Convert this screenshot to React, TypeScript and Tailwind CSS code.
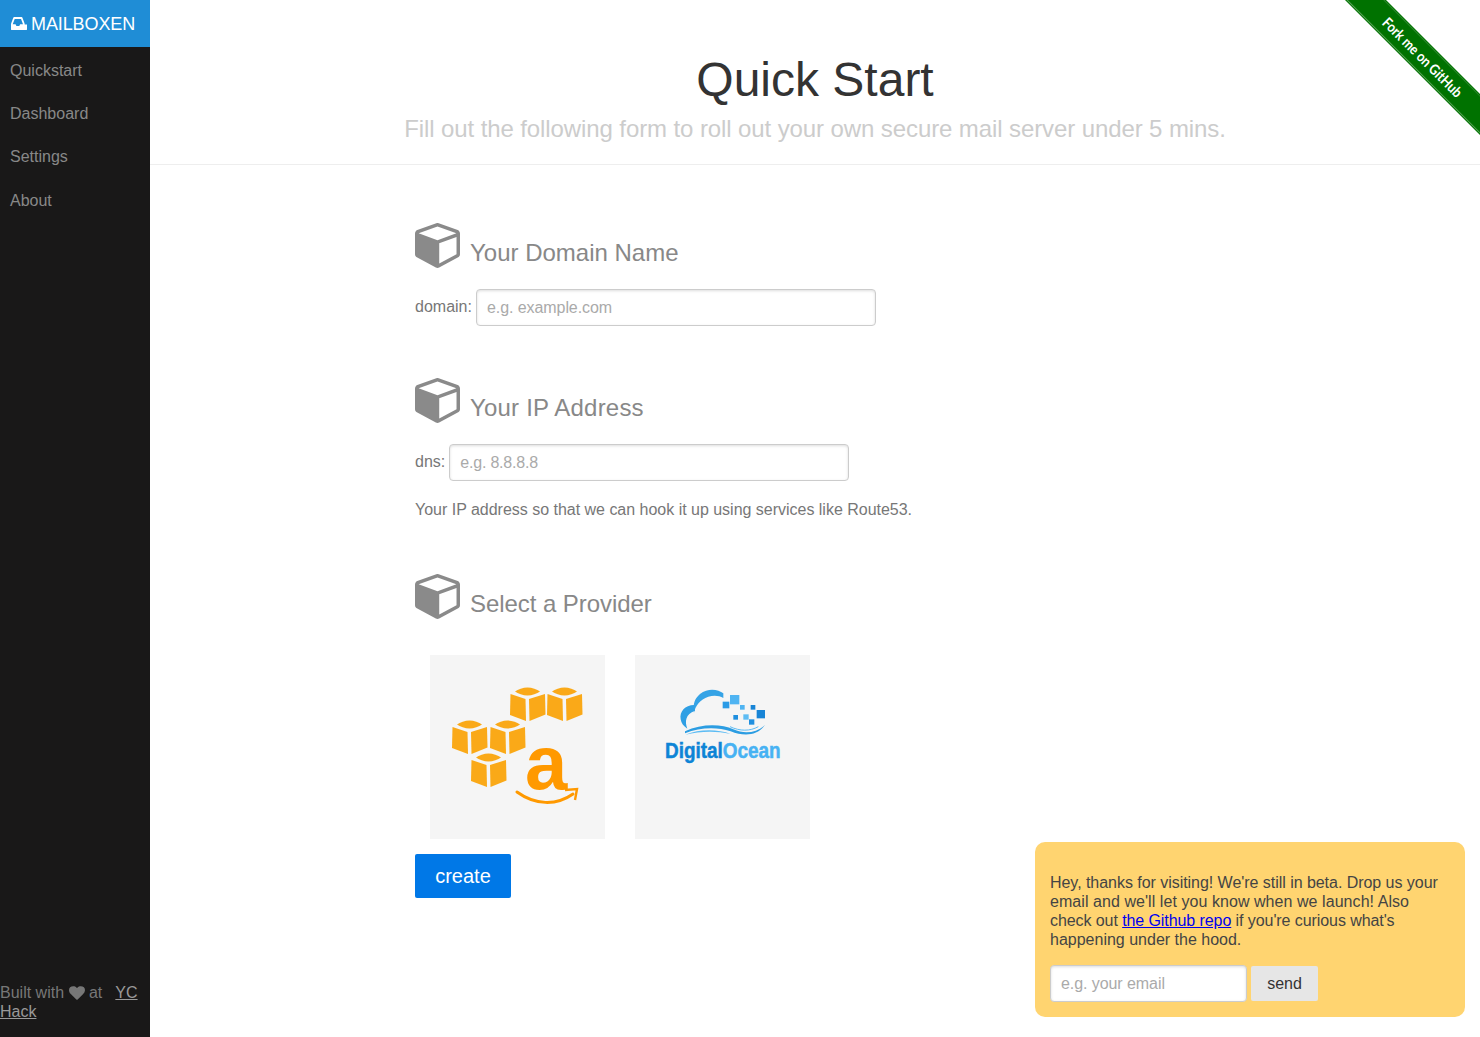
import React from "react";

const font = "font-['Liberation_Sans',Arial,sans-serif]";

function CubeIcon() {
  return (
    <svg viewBox="0 128 1664 1665" className="w-[45px] h-[45px] shrink-0" fill="#8a8a8a">
      <path d="M896 1629l640-349v-636l-640 233v752zm-64-864l698-254-698-254-698 254zm832-252v768q0 35-18 65t-49 47l-704 384q-28 16-61 16t-61-16l-704-384q-31-17-49-47t-18-65v-768q0-40 23-73t61-49l704-256q22-8 44-8t44 8l704 256q38 16 61 49t23 73z" />
    </svg>
  );
}

function Heading({ children, tracking = "" }: { children: React.ReactNode; tracking?: string }) {
  return (
    <div className="flex items-end h-[45px]">
      <CubeIcon />
      <h2 className={`ml-[10px] text-[24px] leading-[30px] text-[#888] font-normal ${tracking}`}>{children}</h2>
    </div>
  );
}

function Field({ label, placeholder, tracking }: { label: string; placeholder: string; tracking: string }) {
  return (
    <div className="flex items-center mt-[21px]">
      <label className="text-[16px] text-[#777] mr-[4px] -mt-[2px]">{label}</label>
      <input
        placeholder={placeholder}
        className={`w-[400px] h-[37px] px-[10px] bg-white text-[16px] border border-[#ccc] rounded-[4px] shadow-[inset_0_1px_3px_#ddd] placeholder:text-[#aaa] outline-none ${tracking}`}
      />
    </div>
  );
}

function AwsCube({ x, y }: { x: number; y: number }) {
  return (
    <g transform={`translate(${x} ${y})`} fill="#faa918">
      <path d="M17.5 0.5 C22 0.5 27 2.5 30 4.5 C27 6.5 22 8.5 17.5 8.5 C13 8.5 8 6.5 5 4.5 C8 2.5 13 0.5 17.5 0.5Z" />
      <path d="M0.5 7 L15.5 12 L16 34 L0 28 Z" />
      <path d="M19 12 L35 7 L35.5 27.5 L19.5 34 Z" />
    </g>
  );
}

function AwsLogo() {
  return (
    <svg viewBox="0 0 175 184" className="block w-[175px] h-[184px]">
      <AwsCube x={80} y={32} />
      <AwsCube x={117} y={32} />
      <AwsCube x={22} y={65} />
      <AwsCube x={60} y={65} />
      <AwsCube x={41} y={98} />
      <text x="95" y="134" fontFamily="'Liberation Sans',Arial,sans-serif" fontWeight="700" fontSize="76" fill="#ff9900">a</text>
      <path d="M87 137 C105 150 126 151 143 139" fill="none" stroke="#ff9900" strokeWidth="3" strokeLinecap="round" />
      <path d="M135 135 L147 134 L145 145" fill="none" stroke="#ff9900" strokeWidth="2.4" />
    </svg>
  );
}

function DoLogo() {
  const squares: [number, number, number, string][] = [
    [270, 75, 28, "#4fb4f2"],
    [248, 95, 20, "#2a9be6"],
    [300, 105, 14, "#4fb4f2"],
    [332, 105, 14, "#1784d6"],
    [350, 120, 25, "#1784d6"],
    [280, 135, 14, "#1f8fdf"],
    [310, 133, 16, "#5dbcf4"],
    [327, 148, 16, "#1f8fdf"],
  ];
  return (
    <svg viewBox="0 0 510 330" className="block w-[170px] h-[110px] ml-[5px] mt-[15px]">
      <path d="M250 70 C235 58 205 52 180 72 C165 85 158 100 162 128 C166 108 180 88 205 80 C220 75 238 76 250 84Z" fill="#35a3e6" />
      <path d="M162 105 C135 105 118 125 122 148 C124 160 130 168 142 176 C134 155 136 132 165 122Z" fill="#2f9fe4" />
      <path d="M135 184 C185 160 245 162 280 178 C315 194 350 188 375 165 C352 198 312 200 272 184 C230 170 180 172 135 190Z" fill="#2c9de2" />
      <path d="M136 194 C180 176 235 178 272 192 C225 182 180 184 136 194Z" fill="#5dbcf4" />
      <path d="M270 170 C300 184 330 184 355 170" fill="none" stroke="#5dbcf4" strokeWidth="3" />
      {squares.map(([x, y, s, c]) => (
        <rect key={`${x}-${y}`} x={x} y={y} width={s} height={s} fill={c} />
      ))}
      <text
        x="75"
        y="264"
        textLength="347"
        lengthAdjust="spacingAndGlyphs"
        fontFamily="'Liberation Sans',Arial,sans-serif"
        fontWeight="700"
        fontSize="68"
        strokeWidth="1.5"
      >
        <tspan fill="#0d84d6" stroke="#0d84d6">Digital</tspan>
        <tspan fill="#47b2f3" stroke="#47b2f3">Ocean</tspan>
      </text>
    </svg>
  );
}

export default function App() {
  return (
    <div className={`${font} relative flex h-screen min-h-[1037px] overflow-hidden bg-white`}>
      <aside className="w-[150px] shrink-0 bg-[#191818] flex flex-col">
        <div className="h-[47px] bg-[#1f8dd6] flex items-center pl-[11px] pt-[2px] text-white text-[18px] tracking-[-0.1px]">
          <svg viewBox="0 256 1792 1280" preserveAspectRatio="none" className="w-[16px] h-[13px] mr-[4px] -mt-[2px]" fill="currentColor">
            <path d="M1023 960h316q-1-3-2.5-8.5t-2.5-7.5l-212-496h-708l-212 496q-1 3-2.5 8.5t-2.5 7.5h316l95 192h320zm769 30v482q0 26-19 45t-45 19h-1664q-26 0-45-19t-19-45v-482q0-62 25-123l238-552q10-25 36.5-42t52.5-17h832q26 0 52.5 17t36.5 42l238 552q25 61 25 123z" />
          </svg>
          <span>MAILBOXEN</span>
        </div>
        <nav className="pt-[2px] text-[16px] text-[#888]">
          {["Quickstart", "Dashboard", "Settings", "About"].map((t) => (
            <a key={t} className="flex items-center h-[43.4px] pl-[10px]">
              {t}
            </a>
          ))}
        </nav>
        <div className="mt-auto pb-[16px] text-[16px] leading-[19px] text-[#777]">
          Built with{" "}
          <svg viewBox="0 0 1792 1792" className="inline w-[16px] h-[16px] -mt-[2px] ml-[1px] -mr-[1px]" fill="currentColor">
            <path d="M896 1664q-26 0-44-18l-624-602q-10-8-27.5-26t-55.5-65.5-68-97.5-53.5-121-23.5-138q0-220 127-344t351-124q62 0 126.5 21.5t120 58 95.5 68.5 76 68q36-36 76-68t95.5-68.5 120-58 126.5-21.5q224 0 351 124t127 344q0 221-229 450l-623 600q-18 18-44 18z" />
          </svg>{" "}
          at &nbsp; <a className="underline text-[#999]">YC Hack</a>
        </div>
      </aside>

      <main className="flex-1 min-w-0">
        <header className="h-[165px] border-b border-[#eee] text-center pt-[52px]">
          <h1 className="text-[48px] leading-[56px] font-light text-[#333]">Quick Start</h1>
          <p className="mt-[7px] text-[24px] leading-[28px] font-light text-[#ccc] tracking-[-0.1px]">
            Fill out the following form to roll out your own secure mail server under 5 mins.
          </p>
        </header>

        <div className="w-[800px] mx-auto pt-[58px]">
          <Heading>Your Domain Name</Heading>
          <Field label="domain:" placeholder="e.g. example.com" tracking="placeholder:tracking-[-0.07px]" />

          <div className="mt-[52px]">
            <Heading tracking="tracking-[0.2px]">Your IP Address</Heading>
            <Field label="dns:" placeholder="e.g. 8.8.8.8" tracking="placeholder:tracking-[-0.2px]" />
            <p className="mt-[19px] text-[16px] leading-[19px] text-[#777] tracking-[-0.015px]">
              Your IP address so that we can hook it up using services like Route53.
            </p>
          </div>

          <div className="mt-[55px]">
            <Heading tracking="tracking-[-0.06px]">Select a Provider</Heading>
            <div className="flex gap-[30px] mt-[36px] ml-[15px]">
              <div className="w-[175px] h-[184px] bg-[#f5f5f5]">
                <AwsLogo />
              </div>
              <div className="w-[175px] h-[184px] bg-[#f5f5f5] overflow-hidden">
                <DoLogo />
              </div>
            </div>
            <button className="mt-[15px] block w-[96px] h-[44px] bg-[#0078e7] text-white text-[20px] rounded-[2px]">
              create
            </button>
          </div>
        </div>
      </main>

      <div className="absolute top-0 right-0 w-[140px] h-[140px] overflow-hidden">
        <div className="absolute left-[-37px] top-[42.5px] w-[240px] h-[29px] rotate-45 bg-[#007200] flex items-center justify-center">
          <div className="absolute inset-x-0 top-[1px] h-[1px] bg-[#2f8a2f]" />
          <div className="absolute inset-x-0 bottom-[1px] h-[1px] bg-[#5da55d]" />
          <span className="relative inline-block scale-x-[0.86] font-['Lato',sans-serif] font-bold text-[14.5px] text-white">Fork me on GitHub</span>
        </div>
      </div>

      <div className="absolute left-[1035px] top-[842px] w-[430px] h-[175px] rounded-[10px] bg-[#ffd470] p-[15px] pt-[31px] text-[16px] leading-[19px] text-[#444]">
        <p>
          <span className="tracking-[-0.04px]">Hey, thanks for visiting! We're still in beta. Drop us your</span>{" "}
          <span className="tracking-[0.06px]">email and we'll let you know when we launch! Also</span>{" "}
          <span className="tracking-[-0.08px]">
            check out <a className="underline text-[#0000ee]">the Github repo</a> if you're curious what's
          </span>{" "}
          happening under the hood.
        </p>
        <div className="flex items-center gap-[4px] mt-[16px]">
          <input
            placeholder="e.g. your email"
            className="w-[197px] h-[37px] px-[10px] bg-white text-[16px] border border-[#ccc] rounded-[4px] shadow-[inset_0_1px_3px_#ddd] placeholder:text-[#aaa] placeholder:tracking-[-0.07px] outline-none"
          />
          <button className="w-[67px] h-[35px] bg-[#e6e6e6] text-[#333] text-[16px] rounded-[2px]">send</button>
        </div>
      </div>
    </div>
  );
}
